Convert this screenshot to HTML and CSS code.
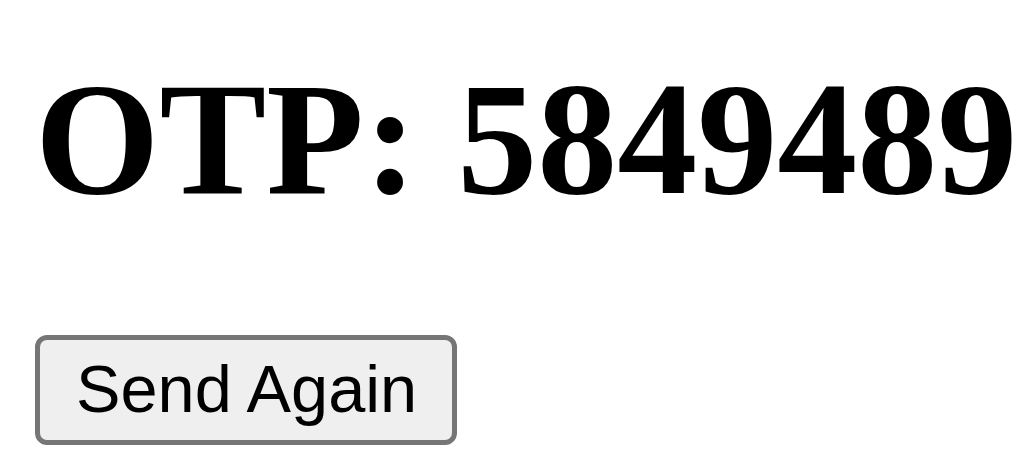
FILE: index.html
```html
<!DOCTYPE html>
<html>
<head>
<meta charset="utf-8">
<link rel="stylesheet" href="styles.css">
</head>
<body>
<div class="page">
  <h1 class="otp">OTP: 5849489</h1>
  <button class="send">Send Again</button>
</div>
</body>
</html>
```
FILE: styles.css
```css
html, body {
  margin: 0;
  padding: 0;
  background: #ffffff;
}
.page {
  padding: 51px 0 0 35px;
  display: flex;
  flex-direction: column;
  align-items: flex-start;
  white-space: nowrap;
}
.otp {
  margin: 0;
  font-family: "Liberation Serif", "Times New Roman", serif;
  font-weight: bold;
  font-size: 160px;
  line-height: 177px;
  color: #000;
}
.send {
  margin: 107px 0 0 0;
  font-family: "Liberation Sans", Arial, sans-serif;
  font-size: 66.7px;
  color: #000;
  background: #efefef;
  border: 5px solid #767676;
  border-radius: 12px;
  padding: 11px 35px 13px 36px;
  line-height: normal;
}
```
